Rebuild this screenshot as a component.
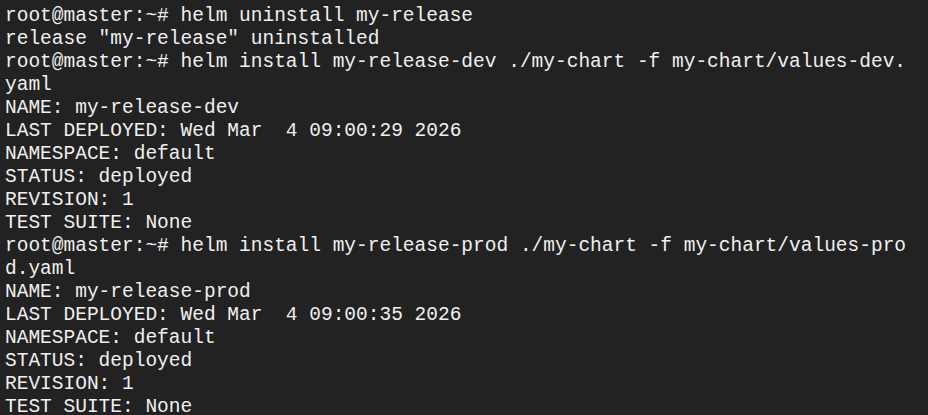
const lines = [
  'root@master:~# helm uninstall my-release',
  'release "my-release" uninstalled',
  'root@master:~# helm install my-release-dev ./my-chart -f my-chart/values-dev.',
  'yaml',
  'NAME: my-release-dev',
  'LAST DEPLOYED: Wed Mar  4 09:00:29 2026',
  'NAMESPACE: default',
  'STATUS: deployed',
  'REVISION: 1',
  'TEST SUITE: None',
  'root@master:~# helm install my-release-prod ./my-chart -f my-chart/values-pro',
  'd.yaml',
  'NAME: my-release-prod',
  'LAST DEPLOYED: Wed Mar  4 09:00:35 2026',
  'NAMESPACE: default',
  'STATUS: deployed',
  'REVISION: 1',
  'TEST SUITE: None',
];

export default function App() {
  return (
    <div className="w-[928px] h-[415px] overflow-hidden bg-[#222222] pl-[5px] pt-[5px]">
      <pre className="font-['Liberation_Mono',monospace] text-[19.5px] leading-[23px] text-[#f0f0f0] whitespace-pre">
        {lines.map((l, i) => (
          <div key={i}>{l}</div>
        ))}
      </pre>
    </div>
  );
}
